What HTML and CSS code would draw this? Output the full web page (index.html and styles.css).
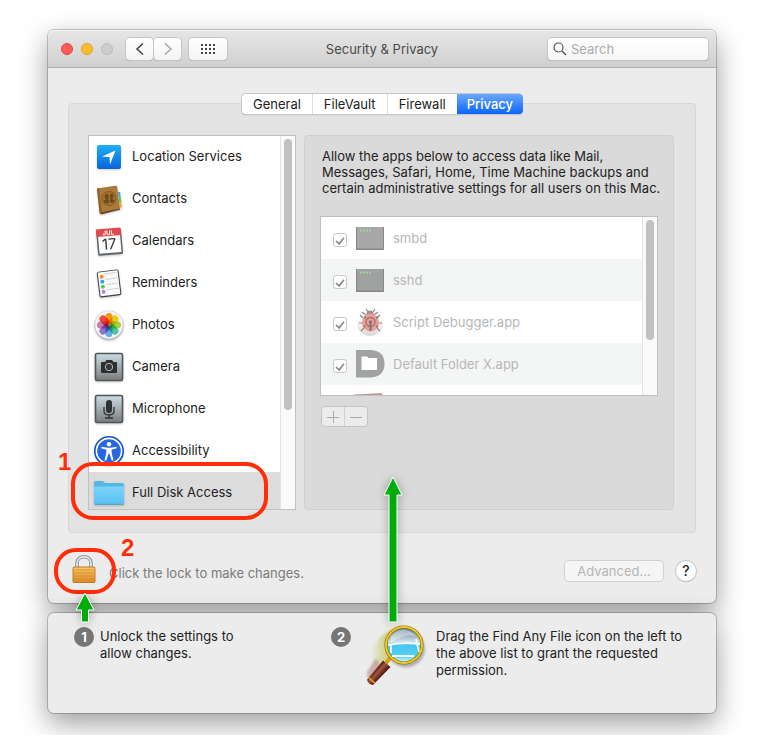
FILE: index.html
```
<!DOCTYPE html>
<html lang="en">
<head>
  <meta charset="UTF-8">
  <meta name="viewport" content="width=device-width, initial-scale=1.0">
  <title>Security &amp; Privacy</title>
  <link rel="stylesheet" href="styles.css">
</head>
<body>
  <main class="window">
    <header class="titlebar">
      <div class="titlebar-left">
        <div class="lights">
          <button class="light light-close" aria-label="Close"></button>
          <button class="light light-minimize" aria-label="Minimize"></button>
          <button class="light light-zoom" aria-label="Zoom" disabled></button>
        </div>
        <div class="nav-buttons">
          <button class="tool-button" aria-label="Back">
            <svg width="10" height="14" viewBox="0 0 10 14"><path d="M8 1.500 2 7l6 5.500" fill="none" stroke="#444" stroke-width="1.600"/></svg>
          </button>
          <button class="tool-button" aria-label="Forward">
            <svg width="10" height="14" viewBox="0 0 10 14"><path d="M2 1.500 8 7l-6 5.500" fill="none" stroke="#a9a9a9" stroke-width="1.600"/></svg>
          </button>
        </div>
        <button class="tool-button tool-grid" aria-label="Show All">
          <svg width="14" height="10" viewBox="0 0 14 10"><path d="M0 1h14M0 5h14M0 9h14" stroke="#444" stroke-width="2" stroke-dasharray="2 2"/></svg>
        </button>
      </div>
      <h1 class="title">Security &amp; Privacy</h1>
      <div class="search">
        <svg width="14" height="14" viewBox="0 0 14 14"><circle cx="5.500" cy="5.500" r="4.500" fill="none" stroke="#555" stroke-width="1.200"/><path d="m9 9 4 4" stroke="#555" stroke-width="1.400"/></svg>
        <input type="text" placeholder="Search" aria-label="Search">
      </div>
    </header>

    <div class="content">
      <div class="tabs">
        <button class="tab">General</button>
        <button class="tab">FileVault</button>
        <button class="tab">Firewall</button>
        <button class="tab tab-active">Privacy</button>
      </div>

      <div class="panel">
        <nav class="sidebar">
          <div class="scroll-box">
            <ul class="services">
              <li><button class="service">
                <svg class="icon" viewBox="0 0 30 30">
                  <defs><linearGradient id="loc" x2="0" y2="1"><stop stop-color="#1eb0f8"/><stop offset="1" stop-color="#0a63d8"/></linearGradient></defs>
                  <rect x="3" y="3" width="24" height="24" rx="2" fill="url(#loc)"/>
                  <path d="M21.500 8.500 8 14.500l7.500.500.500 7.500z" fill="#fff"/>
                </svg>
                Location Services</button></li>
              <li><button class="service">
                <svg class="icon" viewBox="0 0 30 30">
                  <path d="m23 6 3 .5 2 18-3 1.500z" fill="#eee"/>
                  <path d="m24 8 2 0 .6 5-2 .3z" fill="#35a7e8"/><path d="m24.700 13.300 2-.3.600 5-2 .5z" fill="#42c85c"/><path d="m25.300 18.500 2-.5.700 5-2.300 1z" fill="#f5a623"/>
                  <path d="m3 4.500 18-2.800c1.500-.2 2 .3 2.200 1.300L26 24.500 7 30c-1 .2-1.500-.2-1.600-1z" fill="#aa7a3c"/>
                  <path d="m6.500 28.500 19.500-4v1.200L7 30.500z" fill="#6b4520"/>
                  <path d="m3 4.500 2-.3L8 29.500H6z" fill="#8a5f2b"/>
                  <circle cx="15" cy="14.500" r="7" fill="#a27336" stroke="#84591f"/>
                  <path d="M9.500 18c0-2 2-1.500 2.500-3-2-1.500-1.800-5 .8-5s2.400 3.500 1.400 5c.3 1 1 1.500.8 4-2 .8-4 .5-5.500-1zM20.500 17.500c0-2-1.700-1.500-2-3 1.700-1.500 1.500-4.700-.8-4.700s-2 3.400-1.200 4.800c-.2 1-.8 1.400-.6 4 2 .5 3.400.2 4.600-1.100z" fill="#704915"/>
                </svg>
                Contacts</button></li>
              <li><button class="service">
                <svg class="icon" viewBox="0 0 30 30">
                  <g transform="rotate(-5 15 15)">
                    <rect x="3" y="4" width="25" height="25" rx="1.500" fill="#62676b"/>
                    <rect x="4.500" y="3.500" width="22" height="23.500" fill="#fdfdfd"/>
                    <path d="M3 2.500h24.500V10H3z" fill="#e5484a"/>
                    <text x="15" y="8.800" text-anchor="middle" class="cal-month">JUL</text>
                    <text x="15" y="23.500" text-anchor="middle" class="cal-day">17</text>
                  </g>
                </svg>
                Calendars</button></li>
              <li><button class="service">
                <svg class="icon" viewBox="0 0 30 30">
                  <g transform="rotate(-7 15 15)">
                    <rect x="4" y="2.500" width="22" height="26" rx="2" fill="#404144"/>
                    <rect x="5" y="3.200" width="20" height="24" rx="1" fill="#fafafa"/>
                    <path d="M11.500 5.500h12M11.500 11h12M11.500 16.200h12M11.500 21.400h12" stroke="#c9c9c9" stroke-width=".8"/>
                    <circle cx="8.500" cy="8" r="2" fill="#fb8b1d"/><circle cx="8.500" cy="13" r="2" fill="#2ea1f2"/><circle cx="8.500" cy="18" r="2" fill="#5ccc3e"/><circle cx="8.500" cy="23" r="2" fill="#be7bd8"/>
                  </g>
                </svg>
                Reminders</button></li>
              <li><button class="service">
                <svg class="icon" viewBox="0 0 30 30">
                  <circle cx="15" cy="15.500" r="14.500" fill="#aaa"/>
                  <circle cx="15" cy="14.800" r="14.200" fill="#f3f3f3" stroke="#ccc" stroke-width=".5"/>
                  <g class="petals">
                    <rect x="11.500" y="3" width="7" height="11.500" rx="3.500" fill="#ff9500"/>
                    <rect x="11.500" y="3" width="7" height="11.500" rx="3.500" fill="#f4d400" transform="rotate(45 15 15)"/>
                    <rect x="11.500" y="3" width="7" height="11.500" rx="3.500" fill="#a4d830" transform="rotate(90 15 15)"/>
                    <rect x="11.500" y="3" width="7" height="11.500" rx="3.500" fill="#43c99a" transform="rotate(135 15 15)"/>
                    <rect x="11.500" y="3" width="7" height="11.500" rx="3.500" fill="#5cabed" transform="rotate(180 15 15)"/>
                    <rect x="11.500" y="3" width="7" height="11.500" rx="3.500" fill="#8a6cd0" transform="rotate(225 15 15)"/>
                    <rect x="11.500" y="3" width="7" height="11.500" rx="3.500" fill="#d572b4" transform="rotate(270 15 15)"/>
                    <rect x="11.500" y="3" width="7" height="11.500" rx="3.500" fill="#fb3b30" transform="rotate(315 15 15)"/>
                  </g>
                </svg>
                Photos</button></li>
              <li><button class="service">
                <svg class="icon" viewBox="0 0 30 30">
                  <defs><linearGradient id="steel" x2="0" y2="1"><stop stop-color="#cbdde5"/><stop offset="1" stop-color="#7c7c7a"/></linearGradient></defs>
                  <rect x="1.500" y="1.500" width="27" height="27" rx="1.500" fill="url(#steel)" stroke="#50565c" stroke-width="1.600"/>
                  <path d="M8 10h3l1.500-2h5.500l1.500 2H22q1 0 1 1v9q0 1-1 1H8q-1 0-1-1v-9q0-1 1-1z" fill="#2c2e2f"/>
                  <circle cx="15" cy="15" r="3.700" fill="#343638" stroke="#aebbc0" stroke-width="1"/>
                </svg>
                Camera</button></li>
              <li><button class="service">
                <svg class="icon" viewBox="0 0 30 30">
                  <rect x="1.500" y="1.500" width="27" height="27" rx="1.500" fill="url(#steel)" stroke="#50565c" stroke-width="1.600"/>
                  <rect x="12" y="6" width="6" height="13" rx="3" fill="#303233"/>
                  <path d="M10 13v4q0 4 5 4t5-4v-4M15 21v3M11 24h8" fill="none" stroke="#303233" stroke-width="1.300"/>
                </svg>
                Microphone</button></li>
              <li><button class="service">
                <svg class="icon" viewBox="0 0 30 30">
                  <circle cx="15" cy="15" r="15" fill="#174fc2"/>
                  <circle cx="15" cy="15" r="12.600" fill="#2667e3" stroke="#fff" stroke-width="1.600"/>
                  <circle cx="15" cy="8.300" r="2.200" fill="#fff"/>
                  <path d="m7.500 10.800 6 1h3l6-1 .2 1.500-5.200 1.500.4 4 1.600 6.500-1.600.5-2.400-7h-1l-2.400 7-1.600-.5 1.600-6.500.4-4-5.200-1.500z" fill="#fff"/>
                </svg>
                Accessibility</button></li>
              <li><button class="service service-selected">
                <svg class="icon" viewBox="0 0 30 30">
                  <defs><linearGradient id="folder" x2="0" y2="1"><stop stop-color="#7cd3fa"/><stop offset="1" stop-color="#5bc1f2"/></linearGradient></defs>
                  <path d="M0 4.500Q0 3 1.500 3h7q1 0 1.800 1.500L11 5h17.500Q30 5 30 6.500V26H0z" fill="#54b6e3"/>
                  <path d="M0 8.500h30V25q0 1-1 1H1q-1 0-1-1z" fill="url(#folder)"/>
                  <path d="M.5 26.300h29" stroke="#439fca"/>
                </svg>
                Full Disk Access</button></li>
            </ul>
            <div class="scrollbar"><div class="thumb thumb-services"></div></div>
          </div>
          <span class="mark mark-list"></span>
          <span class="mark-number mark-number-list">1</span>
        </nav>

        <section class="details">
          <p class="explain">Allow the apps below to access data like Mail, Messages, Safari, Home, Time Machine backups and certain administrative settings for all users on this Mac.</p>
          <div class="scroll-box app-box">
            <ul class="apps">
              <li><label class="app">
                <input type="checkbox" checked disabled>
                <svg class="app-icon" viewBox="0 0 28 28"><path d="M0 3h28v23H0z" fill="#878787"/><path d="M1 3h26v21.500H1z" fill="#a7a7a7"/><path d="M4 6.500h11" stroke="#9bd0a3" stroke-width="2" stroke-dasharray="2 1"/></svg>
                smbd</label></li>
              <li><label class="app">
                <input type="checkbox" checked disabled>
                <svg class="app-icon" viewBox="0 0 28 28"><path d="M0 3h28v23H0z" fill="#878787"/><path d="M1 3h26v21.500H1z" fill="#a0a2a1"/><path d="M4 6.500h11" stroke="#9bd0a3" stroke-width="2" stroke-dasharray="2 1"/></svg>
                sshd</label></li>
              <li><label class="app">
                <input type="checkbox" checked disabled>
                <svg class="app-icon" viewBox="0 0 28 28">
                  <defs><linearGradient id="disc" x2="0" y2="1"><stop offset=".3" stop-color="#fff"/><stop offset="1" stop-color="#d9d9d9"/></linearGradient></defs>
                  <circle cx="14" cy="14.500" r="13.500" fill="url(#disc)"/>
                  <path d="m7 10-3-3M21 10l3-3M6 15H3M22 15h4M8 20l-3 3M21 20l3 3M12 4l-2-3M17 4l2-3M10 7 6 4M18 7l4-3" stroke="#8c8585" stroke-width="1.200"/>
                  <circle cx="14" cy="6" r="3.500" fill="#949090"/>
                  <ellipse cx="14.500" cy="14.500" rx="8.500" ry="9" fill="#f29a93"/>
                  <circle cx="14.500" cy="14" r="4.500" fill="none" stroke="#8c7a7a" stroke-width="1.500"/>
                  <circle cx="14.500" cy="14" r="1.700" fill="#7f7676"/>
                  <path d="M14.500 14v9" stroke="#7f7676" stroke-width="2"/>
                  <path d="M8 9.500h2M7.500 18.500h2M20 9.500h2M20 18.500h2" stroke="#857b7b" stroke-width="2"/>
                </svg>
                Script Debugger.app</label></li>
              <li><label class="app">
                <input type="checkbox" checked disabled>
                <svg class="app-icon" viewBox="0 0 28 28"><path d="M0 0h15q13.500 1 13.500 13.800T15 27.500H0z" fill="#a1a3a2"/><path d="M5.500 6.500H11l1.500 1.500H21v12H5.500z" fill="#fff"/></svg>
                Default Folder X.app</label></li>
              <li><label class="app">
                <input type="checkbox" checked disabled>
                <svg class="app-icon" viewBox="0 0 28 28"><path d="m-2 2.500 28-1.500 2 26H0z" fill="#bd9c98"/></svg>
                </label></li>
            </ul>
            <div class="scrollbar"><div class="thumb thumb-apps"></div></div>
          </div>
          <div class="add-remove">
            <button class="small-button" aria-label="Add" disabled>
              <svg width="12" height="12" viewBox="0 0 12 12"><path d="M0 6.500h12M6.500 0v12" stroke="#aaa"/></svg>
            </button>
            <button class="small-button" aria-label="Remove" disabled>
              <svg width="12" height="12" viewBox="0 0 12 12"><path d="M0 6.500h12" stroke="#aaa"/></svg>
            </button>
          </div>
        </section>
      </div>
    </div>

    <footer class="footer">
      <button class="lock" aria-label="Unlock">
        <svg width="24" height="28" viewBox="0 0 24 28">
          <defs><linearGradient id="gold" x2="0" y2="1"><stop stop-color="#ffc867"/><stop offset="1" stop-color="#dc8c24"/></linearGradient></defs>
          <path d="M5 13V8.500C5 -.5 19 -.5 19 8.500V13" fill="none" stroke="#84898e" stroke-width="3.500"/>
          <path d="M5 13V8.500C5 -.5 19 -.5 19 8.500V13" fill="none" stroke="#dfe4e8" stroke-width="1.800"/>
          <rect x="1" y="12" width="22" height="15.500" rx="1" fill="url(#gold)" stroke="#a6671b" stroke-width=".8"/>
          <path d="M2 15h20M2 18h20M2 21h20M2 24h20" stroke="#c98125" stroke-width=".7"/>
        </svg>
      </button>
      <span class="lock-text">Click the lock to make changes.</span>
      <button class="advanced" disabled>Advanced...</button>
      <button class="help" aria-label="Help">?</button>
      <span class="mark mark-lock"></span>
      <span class="mark-number mark-number-lock">2</span>
    </footer>
  </main>

  <section class="window guide">
    <div class="step step-unlock">
      <span class="badge">1</span>
      <p>Unlock the settings to allow changes.</p>
    </div>
    <div class="step step-drag">
      <span class="badge">2</span>
      <svg class="magnifier" width="64" height="64" viewBox="0 0 64 64">
        <defs>
          <linearGradient id="lens" x2="0" y2="1"><stop stop-color="#536f7f"/><stop offset=".42" stop-color="#d4e6ed"/><stop offset=".5" stop-color="#49c5ef"/><stop offset=".8" stop-color="#4fd0f4"/><stop offset="1" stop-color="#effcff"/></linearGradient>
          <linearGradient id="trail" x1="1" x2="0"><stop stop-color="#d3a91b"/><stop offset=".6" stop-color="#cfd795" stop-opacity=".8"/><stop offset="1" stop-color="#e9e9e9" stop-opacity="0"/></linearGradient>
          <linearGradient id="wood"><stop stop-color="#4a170f"/><stop offset=".4" stop-color="#a2553e"/><stop offset="1" stop-color="#421008"/></linearGradient>
          <filter id="blur"><feGaussianBlur stdDeviation="1.200"/></filter>
        </defs>
        <ellipse cx="43" cy="25" rx="19" ry="18.500" fill="#b0b0b0" filter="url(#blur)"/>
        <path d="M38 2Q14 8 4 34l1 6 14 0 10-8z" fill="url(#trail)" filter="url(#blur)"/>
        <path d="M13 34 4 48l1 8 13-14z" fill="#b78278" opacity=".6" filter="url(#blur)"/>
        <path d="m23 39 5-6" stroke="#d3a30d" stroke-width="4"/>
        <g transform="rotate(42 15 48)">
          <path d="M11 36h10l-1 25q-4 3-8 0z" fill="url(#wood)"/>
          <path d="M12 58.500h8" stroke="#e1a62b" stroke-width="1.500"/>
        </g>
        <circle cx="41" cy="21" r="18" fill="url(#lens)" stroke="#9a7009" stroke-width="3.200"/>
        <circle cx="41" cy="21" r="18" fill="none" stroke="#f0cb2a" stroke-width="1.800"/>
        <path d="M25 21q15-3 32-1M28 21v8M53 15l3 13M29 32h22" fill="none" stroke="#f2fdff" stroke-width="1.800"/>
        <path d="M28 12q12-13 25 0-12-3-25 7z" fill="#fff" opacity=".4"/>
      </svg>
      <p>Drag the Find Any File icon on the left to the above list to grant the requested permission.</p>
    </div>
    <svg class="arrow arrow-unlock" width="22" height="32" viewBox="0 0 22 32"><path d="m11 2 9 17h-5.500v12h-7V19H2z" fill="#00ad08" stroke="#fff"/></svg>
    <svg class="arrow arrow-drag" width="22" height="148" viewBox="0 0 22 148"><path d="m11 2 9 18h-5v127H7V20H2z" fill="#00ad08" stroke="#fff"/></svg>
  </section>
</body>
</html>
```
FILE: styles.css
```
* {
  box-sizing: border-box;
}

body {
  margin: 0;
  padding: 30px 48px 22px;
  background-color: #fff;
  color: #222;
  font-family: Inter, "Liberation Sans", sans-serif;
  font-size: 13px;
  line-height: 16px;
}

button,
input {
  font: inherit;
  color: inherit;
  margin: 0;
}

button {
  padding: 0;
  border: none;
  background: none;
}

ul,
p {
  margin: 0;
  padding: 0;
  list-style: none;
}

.window {
  background-color: #ececec;
  border-radius: 6px;
  box-shadow: 0 0 0 1px rgba(0,0,0,0.2), 0 10px 28px rgba(0,0,0,0.4);
}

/* Title bar */
.titlebar {
  display: grid;
  grid-template-columns: 1fr auto 1fr;
  align-items: center;
  height: 38px;
  padding: 0 8px;
  border-bottom: 1px solid #adadad;
  border-radius: 6px 6px 0 0;
  background: linear-gradient(#e6e6e6, #d0d0d0);
  box-shadow: inset 0 1px #f4f4f4;
}

.titlebar-left {
  display: flex;
  align-items: center;
}

.lights {
  display: flex;
  gap: 8px;
  margin: 0 13px 0 5px;
}

.light {
  width: 12px;
  height: 12px;
  border: 1px solid #bdbdbd;
  border-radius: 50%;
  background-color: #cdcdcd;
}

.light-close {
  background-color: #fc5b57;
  border-color: #e2443f;
}

.light-minimize {
  background-color: #fdbc2e;
  border-color: #e0a023;
}

.nav-buttons {
  display: flex;
  gap: 1px;
  margin-right: 8px;
}

.tool-button {
  display: flex;
  align-items: center;
  justify-content: center;
  width: 27px;
  height: 22px;
  border-radius: 4px;
  background: linear-gradient(#fff, #f3f3f3);
  box-shadow: 0 0 0 1px #c6c6c6, 0 1px 1px #999;
}

.tool-grid {
  width: 38px;
}

.title {
  margin: 0;
  font-size: 13px;
  font-weight: 400;
  color: #4a4a4a;
}

.search {
  display: flex;
  align-items: center;
  gap: 4px;
  justify-self: end;
  width: 160px;
  height: 22px;
  padding: 0 5px;
  border-radius: 4px;
  background: linear-gradient(#fff, #f6f6f6);
  box-shadow: 0 0 0 1px #c6c6c6, 0 1px 1px #999;
}

.search input {
  flex: 1;
  min-width: 0;
  padding: 0;
  border: none;
  outline: none;
  background: none;
}

.search input::placeholder {
  color: #aaa;
}

/* Tabs */
.content {
  padding: 26px 20px 0;
}

.tabs {
  position: relative;
  display: flex;
  width: max-content;
  height: 20px;
  margin: 0 auto -11px;
  border-radius: 4px;
  background-color: #fff;
  box-shadow: 0 0 0 1px #c8c8c8, 0 1px 1px #999;
}

.tab {
  padding: 0 11px 1px;
  border-right: 1px solid #ddd;
}

.tab-active {
  margin: 0 -1px;
  padding: 0 10px 1px;
  border: none;
  border-radius: 0 4px 4px 0;
  background: linear-gradient(#6aa8fb, #0a66fd);
  color: #fff;
  font-weight: 500;
}

.panel {
  display: flex;
  gap: 8px;
  padding: 31px 21px 22px 19px;
  border: 1px solid #d8d8d8;
  border-radius: 4px;
  background-color: #e3e3e3;
}

/* Service list */
.sidebar {
  position: relative;
  width: 208px;
}

.scroll-box {
  display: flex;
  height: 375px;
  overflow: hidden;
  border: 1px solid #c0c0c0;
  background-color: #fff;
}

.services,
.apps {
  flex: 1;
}

.service {
  display: flex;
  align-items: center;
  gap: 8px;
  width: 100%;
  height: 42px;
  padding: 0 5px 3px;
}

.service-selected {
  background-color: #dcdcdc;
}

.icon {
  width: 30px;
  height: 30px;
  overflow: visible;
  margin-top: 3px;
  filter: drop-shadow(0 1px 1px rgba(0,0,0,0.2));
}

.cal-month {
  fill: #fff;
  font-size: 6px;
  font-weight: 700;
}

.cal-day {
  fill: #333;
  font-size: 15px;
}

.petals rect {
  mix-blend-mode: multiply;
  opacity: 0.9;
}

.scrollbar {
  width: 15px;
  padding: 3px;
  border-left: 1px solid #e2e2e2;
  background-color: #fafafa;
}

.thumb {
  width: 8px;
  border-radius: 4px;
  background-color: #c1c1c1;
}

.thumb-services {
  height: 271px;
}

.thumb-apps {
  height: 120px;
}

/* App list */
.details {
  flex: 1;
  padding: 12px 15px;
  border: 1px solid #d0d0d0;
  border-radius: 4px;
  background-color: #dadada;
}

.explain {
  margin: 0 -10px 20px 2px;
}

.app-box {
  height: 180px;
}

.app {
  display: flex;
  align-items: center;
  height: 42px;
  padding-left: 12px;
  color: #b7b7b7;
}

.apps li:nth-child(even) {
  background-color: #f4f5f5;
}

.app input {
  appearance: none;
  display: flex;
  align-items: flex-start;
  justify-content: center;
  width: 14px;
  height: 14px;
  margin: 3px 9px 0 0;
  border: 1px solid #c8c8c8;
  border-radius: 3px;
  background-color: #fff;
}

.app input:checked::before {
  content: "";
  width: 4px;
  height: 8px;
  margin-top: 1px;
  border: solid #8c8c8c;
  border-width: 0 2px 2px 0;
  box-sizing: content-box;
  transform: rotate(38deg) scale(0.85);
}

.app-icon {
  width: 28px;
  height: 28px;
  margin-right: 9px;
  overflow: visible;
}

.add-remove {
  display: flex;
  width: 47px;
  height: 21px;
  margin: 10px 0 0 1px;
  border: 1px solid #c4c4c4;
  border-radius: 4px;
  background-color: #ececec;
}

.small-button {
  display: flex;
  flex: 1;
  align-items: center;
  justify-content: center;
}

.small-button + .small-button {
  border-left: 1px solid #d0d0d0;
}

/* Footer */
.footer {
  position: relative;
  display: flex;
  align-items: center;
  height: 70px;
  padding: 6px 20px 0 24px;
}

.lock {
  width: 24px;
  height: 28px;
  margin: 0 13px 4px 0;
}

.lock-text {
  flex: 1;
  padding-top: 4px;
  color: #7b7b7b;
}

.advanced {
  width: 98px;
  height: 20px;
  margin-right: 13px;
  border-radius: 4px;
  background-color: #f5f5f5;
  box-shadow: 0 0 0 1px #d0d0d0;
  color: #b5b5b5;
}

.help {
  width: 20px;
  height: 20px;
  border-radius: 50%;
  background-color: #fff;
  box-shadow: 0 0 0 1px #ccc, 0 1px 1px #999;
  font-size: 14px;
  font-weight: 500;
}

/* Red call-outs */
.mark {
  position: absolute;
  border: 4px solid #ff2d08;
  border-radius: 22px;
  pointer-events: none;
}

.mark-list {
  left: -17px;
  bottom: -10px;
  width: 197px;
  height: 58px;
}

.mark-lock {
  left: 6px;
  top: 15px;
  width: 62px;
  height: 46px;
}

.mark-number {
  position: absolute;
  color: #ff2d08;
  font-family: "Liberation Sans", Arial, sans-serif;
  font-size: 24px;
  font-weight: 700;
  line-height: 24px;
}

.mark-number-list {
  left: -30px;
  bottom: 36px;
}

.mark-number-lock {
  left: 73px;
  top: 3px;
}

/* Instructions */
.guide {
  position: relative;
  display: flex;
  min-height: 100px;
  margin-top: 10px;
  line-height: 17px;
}

.step {
  display: flex;
  align-items: flex-start;
  padding-top: 15px;
}

.step p {
  max-width: 255px;
}

.step-unlock {
  width: 283px;
  padding-left: 26px;
}

.step-unlock p {
  max-width: 150px;
  margin-left: 6px;
}

.badge {
  flex: none;
  width: 20px;
  height: 20px;
  margin-top: -1px;
  border-radius: 50%;
  background-color: #767676;
  color: #fff;
  font-weight: 700;
  line-height: 20px;
  text-align: center;
}

.magnifier {
  flex: none;
  margin: -4px 9px 0 12px;
}

.arrow {
  position: absolute;
  filter: drop-shadow(0 0 5px rgba(0,0,0,0.3));
}

.arrow-unlock {
  left: 26px;
  bottom: 90px;
}

.arrow-drag {
  left: 334px;
  bottom: 90px;
}
```
